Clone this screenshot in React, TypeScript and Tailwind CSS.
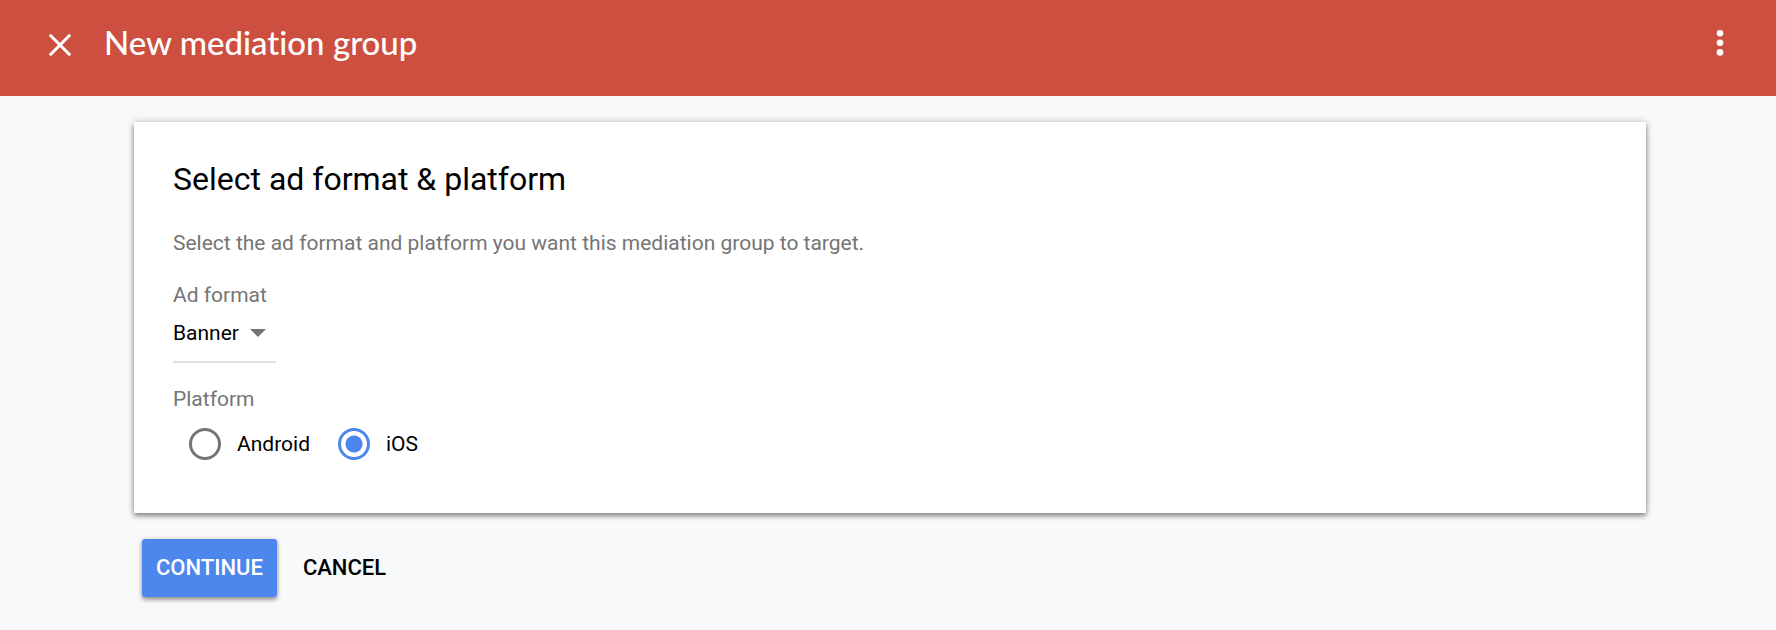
import { useState } from "react";

const platforms = ["Android", "iOS"];

export default function App() {
  const [platform, setPlatform] = useState("iOS");
  const [format, setFormat] = useState("Banner");

  return (
    <div className="min-h-screen bg-[#f8f9fb] font-['Roboto',sans-serif] text-black">
      <header className="flex h-24 items-start bg-[#cc4f40] pt-5 pr-8 pl-9 text-white">
        <button type="button" aria-label="Close" className="flex size-12 items-center justify-center">
          <svg viewBox="0 0 24 24" className="size-6" fill="none" stroke="currentColor" strokeWidth="3" aria-hidden="true">
            <path d="M1.8 2.8 22.2 23.2M22.2 2.8 1.8 23.2" />
          </svg>
        </button>
        <h1 className="ml-5 flex-1 font-['Lato',sans-serif] text-[33px] leading-11 font-medium [font-variant-ligatures:none]">
          New mediation group
        </h1>
        <button type="button" aria-label="More options" className="flex h-12 w-12 items-center justify-center">
          <svg viewBox="0 0 8 28" className="h-7 w-2" fill="currentColor" aria-hidden="true">
            <circle cx="4" cy="3.2" r="3.3" />
            <circle cx="4" cy="12.8" r="3.3" />
            <circle cx="4" cy="22.4" r="3.3" />
          </svg>
        </button>
      </header>

      <main className="pt-[26px] pr-[130px] pl-[134px]">
        <section className="bg-white px-[39px] pt-[37px] pb-[53px] shadow-[0_3px_5px_rgba(0,0,0,0.4),0_0_8px_rgba(0,0,0,0.2)]">
          <h2 className="text-[32px] leading-10">Select ad format &amp; platform</h2>
          <p className="mt-8 text-[21px] leading-6 text-[#757575]">
            Select the ad format and platform you want this mediation group to target.
          </p>

          <label htmlFor="format" className="mt-7 block text-[21px] leading-6 text-[#757575]">
            Ad format
          </label>
          <div className="mt-2.5 grid w-fit items-center border-b-2 border-[#e0e0e0]">
            <select
              id="format"
              value={format}
              onChange={(e) => setFormat(e.target.value)}
              className="col-start-1 row-start-1 h-11 w-[103px] appearance-none bg-transparent pb-3 text-[21px] leading-6"
            >
              <option>Banner</option>
            </select>
            <svg viewBox="0 0 16 8" className="pointer-events-none col-start-1 row-start-1 mr-[10px] mb-3 h-2 w-4 justify-self-end" fill="#757575" aria-hidden="true">
              <path d="M0 0h16L8 8z" />
            </svg>
          </div>

          <fieldset className="mt-6">
            <legend className="text-[21px] leading-6 text-[#757575]">Platform</legend>
            <div className="mt-[17px] flex gap-7 pl-4">
              {platforms.map((name) => (
                <label key={name} className="flex items-center gap-4 text-[21px] leading-8">
                  <input
                    type="radio"
                    name="platform"
                    value={name}
                    checked={platform === name}
                    onChange={() => setPlatform(name)}
                    className="size-8 appearance-none rounded-full border-3 border-[#757575] checked:border-[#4d87ee] checked:bg-[radial-gradient(circle,#4d87ee_8px,transparent_9px)]"
                  />
                  {name}
                </label>
              ))}
            </div>
          </fieldset>
        </section>

        <div className="mt-[26px] flex gap-3 px-2">
          <button
            type="button"
            className="h-[58px] rounded-[3px] bg-[#4d87ee] px-3.5 text-[22px] leading-6 font-medium text-white shadow-[0_3px_4px_rgba(0,0,0,0.35),0_0_5px_rgba(0,0,0,0.15)]"
          >
            CONTINUE
          </button>
          <button type="button" className="h-[58px] px-3.5 text-[22px] leading-6 font-medium">
            CANCEL
          </button>
        </div>
      </main>
    </div>
  );
}
